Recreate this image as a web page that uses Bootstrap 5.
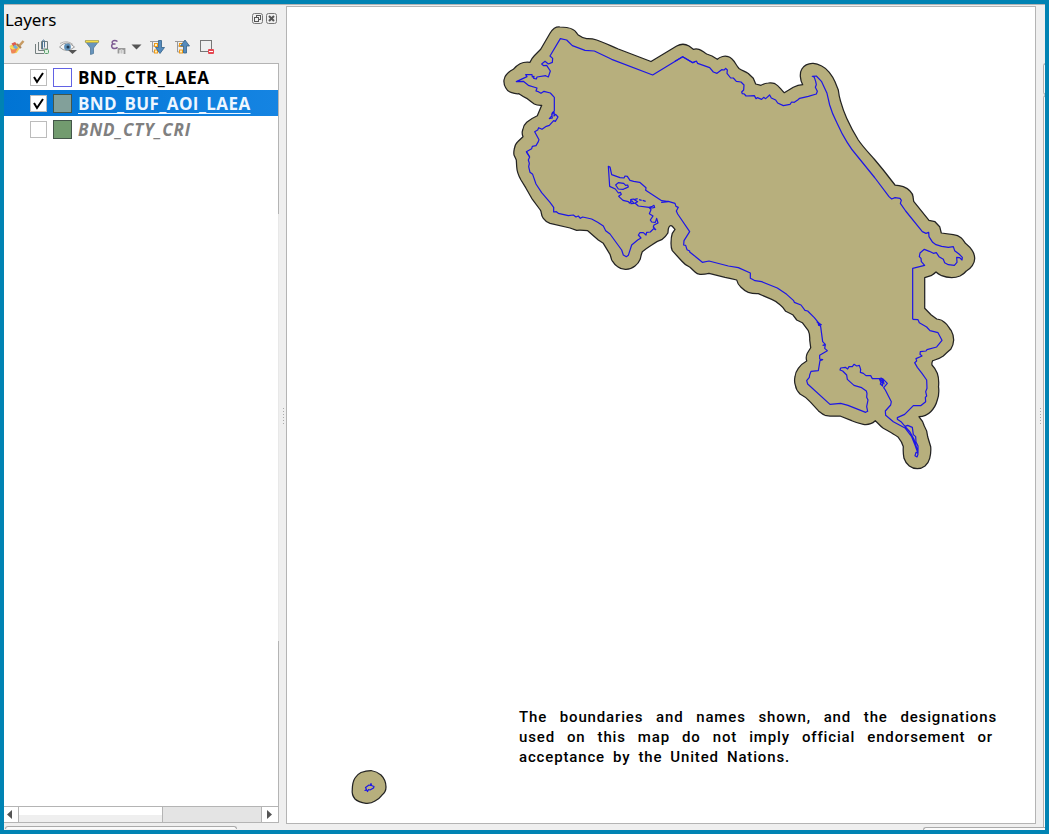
<!DOCTYPE html>
<html lang="en">
<head>
<meta charset="utf-8">
<meta name="viewport" content="width=device-width, initial-scale=1">
<title>Layers</title>
<link href="https://cdn.jsdelivr.net/npm/bootstrap@5.3.0/dist/css/bootstrap.min.css" rel="stylesheet">
<style>
body{font-family:"Open Sans","Noto Sans",sans-serif;color:#000;background:#0083b3}
.frame{width:1049px;height:834px;border:4px solid #0083b3;background:#efefef}
.frame-in{border-top:1px solid #b4b4b4}
.side{width:275px}
.side-head{height:28px;padding:1px 0 0 1px}
.side-title{font-family:"Noto Sans",sans-serif;font-size:17px;line-height:28px;letter-spacing:-.1px}
.tools{height:30px}
.tree{border-top:1px solid #b4b4b4;background:#fff;height:743px}
.edge{width:1px;background:linear-gradient(#b4b4b4 151px,#e8e8e8 151px,#e8e8e8 578px,#b4b4b4 578px)}
.layer{height:26px;padding-left:26px;font-weight:700;font-size:17px;line-height:26px;white-space:nowrap}
.layer.sel{background:linear-gradient(90deg,#0074d4,#1584e2);color:#eef6ff}
.layer.off{color:#808080;font-style:italic}
.tick{width:17px;height:17px;border:1px solid #bcbcbc;background:#fff;margin-right:6px}
.sw{width:19px;height:19px;border:1px solid #44564a;margin-right:6px}
.lname{padding-top:1px;letter-spacing:.42px}
.off .lname{letter-spacing:.85px}
.sel .lname{text-decoration:underline;text-decoration-thickness:1px;text-underline-offset:3px}
.hbar{height:17px;border-top:1px solid #b4b4b4;border-bottom:1px solid #b4b4b4;background:#f0f0f0}
.hbtn{width:14px;background:#fff}
.hbtn.end{width:17px;border-right:1px solid #b4b4b4}
.htrack{width:144px;background:linear-gradient(#fff 8px,#efefef 8px);border-left:1px solid #b4b4b4}
.hthumb{background:#e4e4e4;border-left:1px solid #b4b4b4;border-right:1px solid #b4b4b4}
.tabtop{height:3px;width:232px;margin:3px 0 0 1px;border:1px solid #aaa;border-bottom:0;border-radius:3px 3px 0 0;background:#fafafa}
.split{width:7px;padding-left:2px}
.map{width:750px;height:818px;margin-top:1px;border:1px solid #b4b4b4;background:#fff}
.note{left:232px;top:700px;font:500 15px/20px Roboto,sans-serif;letter-spacing:.85px}
.note div{text-align-last:justify;white-space:nowrap}
.rtab{width:3px;border:1px solid #b0b0b0;border-right:0;border-radius:3px 0 0 3px;background:#fafafa}
.rtabs{left:1039px;top:59px}
.btab{left:919px;top:823px;width:122px;height:3px;border:1px solid #aaa;border-bottom:0;border-right:0;border-radius:3px 0 0 0;background:#fafafa}
</style>
</head>
<body class="overflow-hidden">
<div class="frame position-relative overflow-hidden">
 <div class="frame-in d-flex">
  <aside class="side d-flex flex-column">
   <div class="side-head d-flex justify-content-between">
    <span class="side-title">Layers</span>
    <svg width="28" height="14" style="margin-top:7px" viewBox="0 0 28 14" fill="none" stroke="#555">
     <rect x="1.500" y=".5" width="10" height="10" rx="2" stroke="#777"/><rect x="5.500" y="2.500" width="4" height="4"/><rect x="3.500" y="4.500" width="4" height="4" fill="#efefef"/>
     <rect x="15.500" y=".5" width="10" height="10" rx="2" stroke="#777"/><path d="M18 3l5 5M23 3l-5 5" stroke-width="2"/>
    </svg>
   </div>
   <div class="tools">
    <svg width="275" height="30" viewBox="4 33 275 30" fill="none">
     <path d="M9.500 46l6-3.500 5 5-4 5.500-4 .5z" fill="#f4cf52"/><path d="M11.500 43.500l3.500-1.500 2 2.500-3.500 2z" fill="#dc5a52"/><path d="M15 44.500l3 3-2 2-3-2.500z" fill="#6fb0e0"/><path d="M10 47l4 2.500 4-1.500-3 5-3.500.5z" fill="#ee8658"/><path d="M10 47l3.500 2" stroke="#f6df60" stroke-width="1.500"/><path d="M17 44l4 4" stroke="#a98058" stroke-width="2"/><path d="M19.500 45.500l4-4.500" stroke="#c79a62" stroke-width="2.500"/>
     <path d="M35.500 44v9.500H44M38.500 42v8.500h6M41.500 41.500h6v7.500h-6z" stroke="#747f7f"/><path d="M42.500 49v-7.500q0-1.500 1-1.500t1 1.500v6" stroke="#4f7696"/><rect x="44.500" y="49.500" width="4" height="4" rx="1" fill="#dff0df" stroke="#579c6b"/>
     <path d="M59.500 47q7-8 15 0-8 7-15 0" fill="#f7f7f7" stroke="#9a9a9a"/><path d="M60 43.500q7-4 13 1" stroke="#b4b4b4"/><circle cx="67.500" cy="47" r="3.400" fill="#5d8fb8"/><circle cx="68" cy="47" r="1.500" fill="#263c50"/><path d="M68 50h9l-4.500 4z" fill="#555"/>
     <path d="M85 41h14l-5.500 7v5.500l-3 1V48z" fill="#6794bd" stroke="#4f7899" stroke-width=".8"/><path d="M85.500 40.500h13v2h-13z" fill="#f5df45" stroke="#a79c4a" stroke-width=".6"/>
     <path d="M117.500 41.500q-2-1.500-4-.8-2.500 1.300-.5 3.300h2.500-2.500q-2.500 1.500-.5 4 3 1.500 5-.8" stroke="#7d5a92" stroke-width="1.500"/><path d="M118.500 53.500v-4.500h6v5" stroke="#999" stroke-width="1.800"/><path d="M121.500 49v4.500" stroke="#c4c4c4" stroke-width="2"/>
     <path d="M131.500 44.500h10l-5 5z" fill="#555"/>
     <g id="tree-glyph"><path d="M150 41.500h10M152.500 41v11M152.500 46h3M152.500 52h3" stroke="#999"/><rect x="154.500" y="43.500" width="3" height="3" fill="#fff2c0" stroke="#ef9a1a"/><rect x="154.500" y="50" width="3" height="3" fill="#fff2c0" stroke="#ef9a1a"/></g>
     <path d="M158.500 40.500h3v7h3l-4.500 6-4.500-6h3z" fill="#548bbd" stroke="#315f88" stroke-width=".8"/>
     <use href="#tree-glyph" x="25"/><path d="M183.500 53v-7h-3l4.500-6 4.500 6h-3v7z" fill="#548bbd" stroke="#315f88" stroke-width=".8"/>
     <rect x="200.500" y="40.500" width="11" height="11" stroke="#777"/><rect x="208" y="49" width="6" height="5" rx="1" fill="#e54852"/><path d="M209 51.500h4" stroke="#fff"/>
    </svg>
   </div>
   <div class="d-flex">
    <div class="tree flex-grow-1">
     <div class="layer d-flex align-items-center"><span class="tick d-flex"><svg width="15" height="15" fill="none" stroke="#000" stroke-width="2"><path d="M3 7l3 5L12 3"/></svg></span><span class="sw" style="background:#fff;border-color:#6262e4"></span><span class="lname">BND_CTR_LAEA</span></div>
     <div class="layer sel d-flex align-items-center"><span class="tick d-flex"><svg width="15" height="15" fill="none" stroke="#000" stroke-width="2"><path d="M3 7l3 5L12 3"/></svg></span><span class="sw" style="background:#82a09a"></span><span class="lname">BND_BUF_AOI_LAEA</span></div>
     <div class="layer off d-flex align-items-center"><span class="tick"></span><span class="sw" style="background:#729b6f"></span><span class="lname">BND_CTY_CRI</span></div>
    </div>
    <div class="edge"></div>
   </div>
   <div class="hbar d-flex">
    <div class="hbtn"><svg width="14" height="15" class="d-block"><path d="M8 3v9L3 7.500z" fill="#555"/></svg></div>
    <div class="htrack"></div><div class="hthumb flex-grow-1"></div>
    <div class="hbtn end"><svg width="14" height="15" class="d-block"><path d="M5 3v9l5-4.500z" fill="#555"/></svg></div>
   </div>
   <div class="tabtop"></div>
  </aside>
  <div class="split d-flex align-items-center justify-content-center"><svg width="3" height="18"><path d="M1.500 0v18" stroke="#aaa" stroke-dasharray="1 2"/></svg></div>
  <main class="map position-relative">
   <svg class="d-block" width="748" height="816" viewBox="287 7 748 816" fill="none" stroke-linejoin="round">
    <g fill="#b7af7d" stroke="#232323" stroke-width="1.250">
     <path d="M530 62.300Q531.500 58.500 534.300 55.700T540.700 49.300L550 33.300Q552 30 554.300 28.300 557 26.600 560 27L566.700 27.500Q571 28.200 573.300 29.700C576 31 576.500 33.500 578.300 35 581 37 584 38.300 586.700 38.700Q592 38.500 596.700 40C604 42.500 611 46 618.300 49L651 61.500 676.700 46Q683 42.500 689 46L693.300 49.300Q696 48.600 699 49.300C702 50.200 704 52.500 706.700 54L712 56 717.300 59.300C720 56.500 725 55.500 728.300 56.700 734 58.500 735 64 739 68.500 742 70.500 745 71.500 748.300 73.500L753.300 78.300 755.700 84 761 85.300Q765 83.200 768.300 83 772 82.500 775 83.700C779 85.500 781 90 784.300 92.700L793.300 87.300Q798 85 802.700 84.700C800 80 799.500 73 801.700 69.300 803.500 66 808 62.900 813.300 63.300Q817 63.500 821.700 66C826 68 828 71 830 73.300Q833 77 835 81.700L838.300 90C839 96 839.500 98 840.700 101.700Q843 110 846.700 118.300 852 130 858.300 140C863 147 869 153 875 160L883.300 170 895 185Q899 185 903.300 186.700 908 188.500 910 191 913 194 913 196.700L913.700 201.300 929 220.300 935 221.700 939.700 226.700 941.300 233 953.300 234.700Q958 235.300 961 237.700C964 240 964.500 243 966.300 244Q970 247 972.300 250.700 974.500 254 974.700 258.300 974.800 262 972.300 265.700C970 269 968 270 966.300 271Q964 274 960 276 956 277.700 951.700 277.700 946 277.500 941.700 275.700 938 274 936 272 934 274 931 275.700L924.700 277.700V308.300L931 314.700 936.700 319Q942 319.500 945 322.700C948 325 949 328 951.300 330.700Q953.700 335 953.700 340 953.500 345 950.700 349.300 947.500 352 943.300 356C940 358.500 936 359.500 932.700 360.700Q931.500 363 932 365 935 368 937.300 373.300 939.300 379 938.500 386.700 939.500 394 937.300 400 935.500 407 930.700 411.700 926 416.500 919 416.700 923 421 924.300 426 927.500 431 927.700 436.700L930.700 446.700Q931.200 453 929.700 458.300 928.500 463 925 466 921.500 468.700 917.300 468.700 912.500 468.500 909.300 466 905.500 463 904 458.300 902.900 453 903.300 446.700C902.500 443 900.500 440 898.300 437.300 893 433.500 889 431.500 883.300 428.300 880 426 878 423 875.300 420.700Q873 423 870.700 423.700 867 425 863.300 424.300 857 423 851.700 420.700 845 418 840 416 832 416.500 825 415.300C822 414 820 412 818.300 410.700L810 401.700Q806 397 800 394 796 390 795.300 385 794 381 795 376.700 795.500 372 798.300 368.300 802 363.500 806.700 361 805.500 357 807.300 353.300L810.700 347.700 809.700 340Q810 334 808.300 330.700L802.300 322.700 796.700 320 792.700 314.700 785.700 311.300Q783 307 780 304.700 776 301 771.700 299.300L758.300 293.700Q753 294 748.300 292.300 744 290.500 741 287.300 737.500 284 736.700 280 731 278.500 725 277.300L709 273.300Q704 274.500 700 274.300 697 274 695 272L690 267.300Q685 265 681.700 261L672.300 250.700Q671 248 671 243.300 671 237 672.300 233.300L675 229.300 672.500 226.500Q670.700 224.500 669 227C667.500 230 668.500 232 667.700 233.300 666 236.500 664 238 661.700 239.700Q656 241.500 651.700 245 647 248 642.300 251.700 641 255 640.300 259 638.500 263.500 635 266 631 269.300 626 269.300 621 269.500 617.700 266.700C614.500 265 613 262 611.700 260L610 254.300 603.300 243.300 598.300 240 587.700 230.700Q582 230 576.700 230.300L570 228 550 223.300Q546 222 543.300 218.300C540.500 215 542 212 540.300 210L531.700 198.300 525.700 187.700 521 180Q517 173 516.700 166.700L516.300 160 514 155Q513.500 152 514.300 149 515 144 517.700 141.700L523 136.700Q521.500 133 522.700 130 523.500 125 526.700 122.300 532 118 537.300 115.700L541.700 105.300Q537 105.500 534.300 104 530 101 526.700 98.300C523.500 97 521 95 519 93.700Q515 94 511.700 92.700 507.500 91.500 505.700 87.700 503.500 84 504 80 504.500 76.500 506.700 74.300 509.500 71 513.300 69.300 516.500 65.500 520 63.700 524 61.700 530 62.300Z"/>
     <path d="M361 772.500Q366 770.500 371 770.500 377 771.500 381 775 386 780 386 787 386 792 382 795 379 799 375 801 371 803.700 366 803.300 358 802 355 799 351.500 795 352.300 789 352.500 782 355 778 357 774.500 361 772.500Z"/>
    </g>
    <g stroke="#1d16e6" stroke-width="3.600">
     <!-- north-west coast and border -->
     <path transform="translate(495 15) scale(.33333)" d="M600 140L593 143 563 125 473 180 350 133 298 108 270 106 232 92 215 75 196 71 165 123 173 130 172 142 160 147 150 139 140 147 146 152 155 151 166 168 160 186 152 182 126 186 124 192 116 190 117 184 112 186 111 179 92 179 96 185 64 200 85 199 100 211 126 219 123 228 130 230 138 235 147 229 166 234 178 247 178 288 172 293 171 302 163 311 172 309 170 297 178 293 177 303 182 298 189 306 181 319 176 317 163 331 154 334 141 343 131 338 128 345 119 350 132 374 130 380 123 392 112 394 110 401 94 410 104 426"/>
     <!-- peninsula and gulf -->
     <path transform="translate(495 135) scale(.33333)" d="M94 50L104 66 100 75 103 85 101 95 105 112 113 118 123 147 140 173 165 202 176 217 176 231 184 230 190 235 220 242 235 240 243 246 250 243 256 250 263 246 290 252 308 262 325 273 332 287 345 297 380 345 385 360 394 365 400 361 410 330 428 315 438 309 430 300 435 293 445 293 453 300 455 292 466 291 476 281 482 284 475 276 477 270 489 264 485 250 481 262 470 261 466 255 474 243 463 236 468 224 462 217 472 219 479 217 477 211 470 215 462 217 430 213 420 204 428 200 415 192 407 194 408 206 417 205 410 197 403 204 400 200 384 196 371 184 379 178 376 172 370 174 361 162 344 154 340 94 345 96 350 119 375 128 387 129 390 123 397 124 405 136 416 139 434 142 453 158 452 166 500 197 520 200 500 202 520 199 540 205 543 214 550 217 544 228 548 237 584 290 567 317 566 330 572 331 576 344 584 348 584 351 600 364M362 150L370 143 386 145 392 151 398 150 400 156 391 160 385 163 370 162ZM417 194L428 191M432 194L440 196M443 196L452 199"/>
     <!-- northern border -->
     <path transform="translate(675 30) scale(.33333)" d="M0 94L23 80 54 98 64 93 68 100 104 113 115 126 126 130 140 119 148 120 152 115 157 120 156 130 167 144 175 144 184 154 198 156 207 165 206 180 200 186 202 191 208 192 213 198 238 197 243 206 247 203 260 208 266 202 272 206 284 195 289 204 302 210 308 219 325 227 345 223 350 216 358 217 368 210 374 205 400 199 424 192 427 184 421 172 424 164 422 154 418 142 412 139 424 138 440 155 456 190 464 225Q471 250 486 279 500 311 517 338 530 360 549 381L600 444"/>
     <!-- Caribbean coast -->
     <path transform="translate(825 170) scale(.33333)" d="M150 24L192 80 200 87 210 83 225 85 229 91 226 100 242 123 292 185 303 190 311 187 312 200 323 217 333 224 350 229 370 232 385 230 389 242 402 252 412 262 411 270 404 263 395 262 396 277 388 286 370 284 359 278 355 268 342 260 334 248 325 250 313 244 298 238 285 249 283 260 288 265 289 275 299 286 263 295 263 448"/>
     <!-- Pacific coast -->
     <path transform="translate(665 190) scale(.33333)" d="M90 199L112 217 132 213 190 228 220 233 256 249 256 265 262 268 270 272 290 275 337 294 365 313 386 332 388 337 408 345 420 361 428 363 448 383 462 400"/>
     <!-- southern peninsulas -->
     <path transform="translate(780 310) scale(.33333)" d="M110 35L124 44 116 46 114 38 122 50 128 95 136 103 129 106 136 104 134 115 142 122 119 136 119 147 128 149 120 152 119 158 115 182 93 184 89 195 88 202 80 212 83 222 150 283 182 280 204 286 257 307 263 304 260 290 264 270 260 262 261 250 259 243 245 233 222 226 202 208 200 195 188 183 180 180 182 174 196 172 203 177 207 170 217 170 222 163 230 168 238 166 242 178 241 187 250 190 258 197 272 197 277 206 298 206 303 218 301 222 308 228 306 214 299 206 304 204 312 222 308 206 322 220 311 233 316 240 334 275 332 285 316 303 317 316 340 335 375 354 395 380 405 405 412 425 414 433 411 441 405 437 408 427 414 430 414 408 408 396 407 380 400 374 397 352 383 346 375 349 363 335 352 328 352 323 374 313 400 287 422 287 437 275 436 262 440 258 437 245 441 235 440 210 426 190 412 172 404 158 410 153 408 146 426 138 420 133 421 125 438 123 441 119 470 111 486 91 474 68 450 62 440 51 418 38 414 29 398 28M375 349L390 366 402 388 412 420"/>
    </g>
    <path stroke="#1d16e6" stroke-width="1.200" d="M365 790.500L366.500 789.500 365.500 787.500 369 785 370.500 785.500 371 783.500 371.500 785.500 374 786.500 373.500 788 370 790 368.500 789.500 367.500 791.500 366.500 790Z"/>
   </svg>
   <div class="note position-absolute">
    <div style="width:478px">The boundaries and names shown, and the designations</div>
    <div style="width:474px">used on this map do not imply official endorsement or</div>
    <div style="width:271px">acceptance by the United Nations.</div>
   </div>
  </main>
  <div class="d-flex align-items-center ps-1"><svg width="3" height="18"><path d="M.5 0v18" stroke="#aaa" stroke-dasharray="1 2"/></svg></div>
 </div>
 <div class="rtabs position-absolute"><div class="rtab" style="height:32px"></div><div class="rtab" style="height:735px"></div></div>
 <div class="btab position-absolute"></div>
</div>
<script src="https://cdn.jsdelivr.net/npm/bootstrap@5.3.0/dist/js/bootstrap.bundle.min.js"></script>
</body>
</html>
